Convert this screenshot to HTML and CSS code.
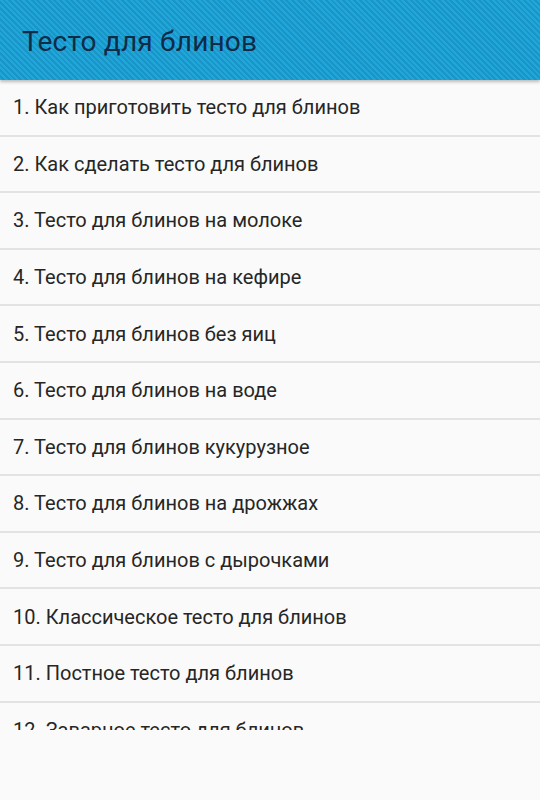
FILE: index.html
```html
<!DOCTYPE html>
<html lang="ru">
<head>
    <meta charset="UTF-8">
    <meta name="viewport" content="width=device-width, initial-scale=1.0">
    <title>Тесто для блинов</title>
    <link rel="stylesheet" href="styles.css">
</head>
<body>
    <header class="action-bar">
        <h1>Тесто для блинов</h1>
    </header>
    <ul class="recipe-list">
        <li>1. Как приготовить тесто для блинов</li>
        <li>2. Как сделать тесто для блинов</li>
        <li>3. Тесто для блинов на молоке</li>
        <li>4. Тесто для блинов на кефире</li>
        <li>5. Тесто для блинов без яиц</li>
        <li>6. Тесто для блинов на воде</li>
        <li>7. Тесто для блинов кукурузное</li>
        <li>8. Тесто для блинов на дрожжах</li>
        <li>9. Тесто для блинов с дырочками</li>
        <li>10. Классическое тесто для блинов</li>
        <li>11. Постное тесто для блинов</li>
        <li>12. Заварное тесто для блинов</li>
    </ul>
</body>
</html>
```

FILE: styles.css
```css
:root {
    --bar-color: #22a6d9;
    --stripe-color: #1896c8;
    --title-color: #0e2c48;
    --text-color: #262626;
    --divider-color: #e3e3e3;
    --background-color: #fafafa;
}
body {
    margin: 0;
    padding: 0;
    background-color: var(--background-color);
    font-family: Roboto, 'Noto Sans', sans-serif;
    color: var(--text-color);
}
.action-bar {
    position: relative;
    z-index: 1;
    height: 80px;
    display: flex;
    align-items: center;
    padding: 0 22px;
    background-color: var(--bar-color);
    background-image: repeating-linear-gradient(45deg, var(--bar-color) 0, var(--bar-color) 2px, var(--stripe-color) 2px, var(--stripe-color) 4px);
    box-shadow: 0 2px 3px rgba(0, 0, 0, 0.25);
}
.action-bar h1 {
    margin: 2px 0 0;
    font-size: 28px;
    font-weight: normal;
    letter-spacing: 0.2px;
    color: var(--title-color);
}
.recipe-list {
    list-style: none;
    margin: 0;
    padding: 0;
    height: 650px;
    overflow: hidden;
}
.recipe-list li {
    box-sizing: border-box;
    height: 56.6px;
    display: flex;
    align-items: center;
    padding: 0 13px;
    font-size: 20px;
    border-bottom: 2px solid var(--divider-color);
}
```
